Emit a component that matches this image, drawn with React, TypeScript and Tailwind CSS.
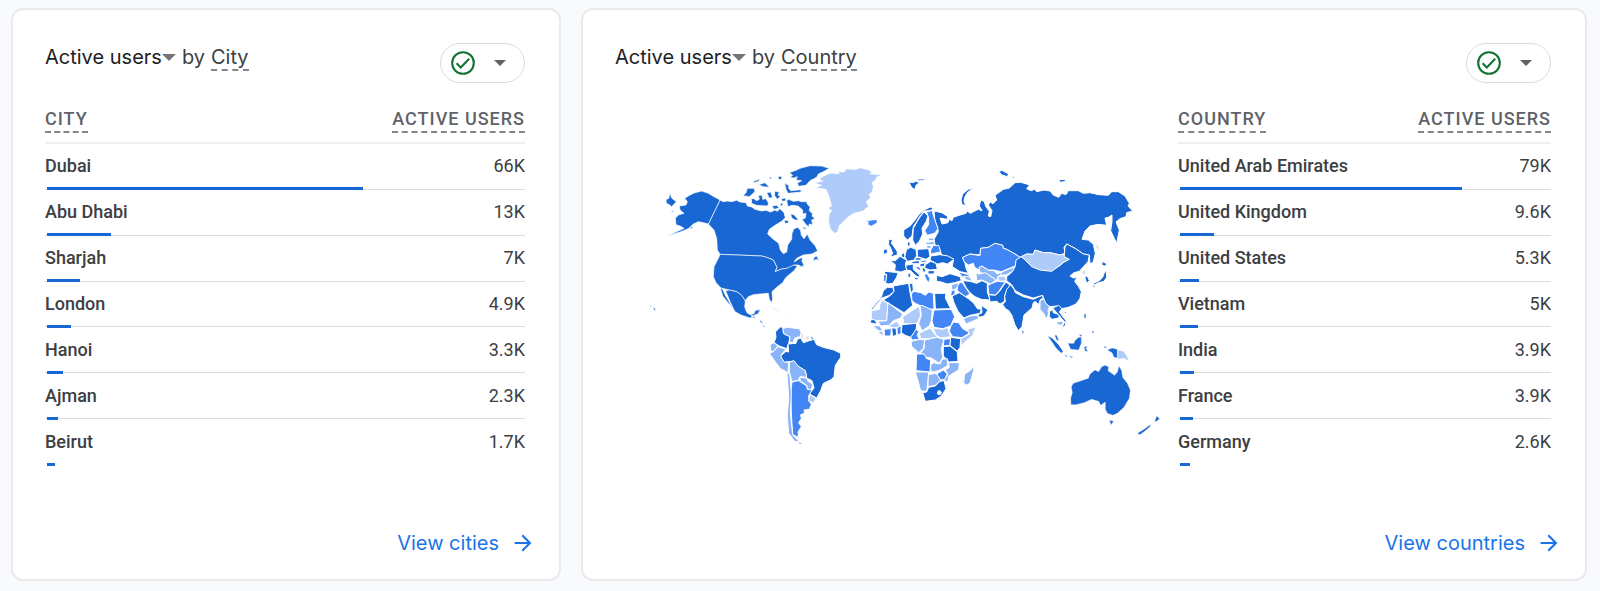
import type { ReactNode } from "react";

interface Row {
  name: string;
  users: string;
  share: number;
}

interface Shape {
  fill: string;
  d: string;
}

interface Region {
  name: string;
  x: number;
  y: number;
  stroke: number;
  shapes: Shape[];
}

const cities: Row[] = [
  { name: "Dubai", users: "66K", share: 66.2 },
  { name: "Abu Dhabi", users: "13K", share: 13.3 },
  { name: "Sharjah", users: "7K", share: 7 },
  { name: "London", users: "4.9K", share: 5 },
  { name: "Hanoi", users: "3.3K", share: 3.4 },
  { name: "Ajman", users: "2.3K", share: 2.3 },
  { name: "Beirut", users: "1.7K", share: 1.7 },
];

const countries: Row[] = [
  { name: "United Arab Emirates", users: "79K", share: 76 },
  { name: "United Kingdom", users: "9.6K", share: 9.2 },
  { name: "United States", users: "5.3K", share: 5.1 },
  { name: "Vietnam", users: "5K", share: 4.8 },
  { name: "India", users: "3.9K", share: 3.7 },
  { name: "France", users: "3.9K", share: 3.6 },
  { name: "Germany", users: "2.6K", share: 2.6 },
];

const XL = "#1967d2";
const L = "#4285f4";
const M = "#8ab4f8";
const S = "#aecbfa";
const NONE = "#e0e0e0";

// Each region has its own origin on the map, shapes are relative to it
const regions: Region[] = [
  {
    name: "North America",
    x: 0,
    y: 0,
    stroke: 2,
    shapes: [
      // Canada
      { fill: XL, d: "M240 150L250 155 262 153 275 155 290 151 300 156 318 158 322 168 335 171 345 178 365 183 378 181 392 186 405 180 412 184 420 176 432 188 436 203 425 214 405 226 388 238 383 252 398 266 416 280 421 300 430 311 440 306 443 285 455 268 456 250 462 236 474 232 482 242 484 256 492 266 502 252 510 270 526 288 533 303 515 312 490 315 470 325 462 336 478 326 488 322 486 334 492 345 484 350 475 345 462 345 452 352 440 355 425 357 405 365 411 352 400 330 380 322 365 318 240 313 232 300 230 265 222 240 205 222Z" },
      // United States
      { fill: XL, d: "M240 313L365 318 380 322 400 330 411 352 405 365 425 357 440 355 462 345 472 348 462 362 455 368 440 380 434 388 428 398 410 412 396 425 398 448 394 458 388 448 385 430 360 432 340 434 325 440 315 452 305 436 290 425 268 420 243 414 228 398 220 380 222 350 235 325Z" },
      { fill: XL, d: "M240 150L205 222 190 218 175 215 160 222 145 236 120 246 82 258 110 245 132 235 120 228 108 224 106 205 115 195 132 190 120 180 118 168 138 165 142 155 134 145 150 135 165 128 185 123 205 130 222 140Z" },
      // Mexico
      { fill: XL, d: "M257 422L268 420 290 425 305 436 316 453 314 470 320 487 330 494 342 491 346 481 361 479 354 492 345 494 338 502 330 504 305 496 285 485 278 472 268 450Z" },
      { fill: XL, d: "M241 414L248 418 256 436 268 456 276 470 262 456 248 438Z" },
      // Eastern tip of Chukotka
      { fill: XL, d: "M90 130L95 144 109 155 95 170 88 164 79 160 78 148 86 146Z" },
      { fill: XL, d: "M93 181L102 184 96 187ZM148 234L160 228 156 236Z" },
      // Arctic islands
      { fill: XL, d: "M448 68L470 60 480 55 510 47 545 48 568 55 550 65 535 72 530 82 510 92 498 106 476 109 472 100 485 92 468 90 472 80 462 84 450 82 458 76Z" },
      { fill: XL, d: "M322 115L342 115 345 125 328 140 309 137 318 128Z" },
      { fill: XL, d: "M334 146L342 146 350 152 358 148 355 136 366 136 368 148 378 146 386 160 382 168 350 166 335 160Z" },
      { fill: XL, d: "M340 94L358 88 358 93 342 98ZM356 104L375 98 388 112 370 110ZM386 82L396 82 392 88ZM414 80L424 78 426 88 416 88Z" },
      { fill: XL, d: "M380 128L392 126 398 142 388 145ZM404 124L418 126 414 136 422 138 412 148 404 138ZM434 100L446 106 446 114 452 122 482 119 484 126 444 130 438 118Z" },
      { fill: XL, d: "M396 168L410 166 418 174 402 178ZM424 146L436 144 438 152 426 154ZM420 158L430 162 424 170Z" },
      { fill: XL, d: "M440 152L446 148 460 154 476 152 484 155 500 155 502 163 510 170 508 182 518 192 516 198 525 206 515 210 518 224 508 222 506 230 498 224 486 208 496 204 498 190 488 192 488 180 474 168 456 166 444 170Z" },
      { fill: XL, d: "M452 192L462 194 476 210 466 210 455 204ZM434 210L446 212 444 220 434 220ZM486 230L500 234 494 238Z" },
      // Newfoundland and Nova Scotia
      { fill: XL, d: "M522 322L530 318 538 332 530 328 520 332ZM478 354L500 344 488 352Z" },
      // Hawaii
      { fill: XL, d: "M40 472L47 477 45 483 41 478ZM28 466L35 468 32 470Z" },
      // Caribbean
      { fill: NONE, d: "M392 468L412 480 410 483 395 474ZM434 486L446 490 438 492Z" },
    ],
  },
  {
    name: "North Atlantic",
    x: 480,
    y: 0,
    stroke: 1,
    shapes: [
      { fill: S, d: "M44 98L70 94 58 86 78 75 92 70 118 72 116 65 132 67 140 57 165 59 180 54 205 60 215 66 210 72 245 75 230 80 228 88 215 98 220 108 216 125 206 134 212 142 198 156 206 170 198 174 190 182 160 190 145 200 132 213 118 226 112 245 105 250 92 238 86 215 88 192 96 182 85 174 95 168 92 155 86 135 78 118 48 113 66 106Z" },
      { fill: L, d: "M198 210L206 213 215 211 230 209 231 218 214 228 203 223 206 217Z" },
    ],
  },
  {
    name: "Eurasia",
    x: 660,
    y: 30,
    stroke: 3,
    shapes: [
      // Russia
      { fill: XL, d: "M222 153L245 158 264 170 260 178 240 174 246 192 264 188 268 178 276 182 280 172 300 165 318 160 322 154 332 160 340 155 355 148 366 152 358 138 362 120 372 124 378 140 388 154 385 168 392 170 396 152 385 135 392 125 398 132 410 120 405 106 416 98 430 88 448 84 465 68 482 67 500 72 508 76 500 86 512 92 525 88 530 95 552 90 570 93 580 105 596 112 605 100 618 104 625 92 655 92 670 100 690 98 715 104 745 106 755 95 775 95 795 108 808 130 804 138 818 153 800 158 798 170 780 176 768 186 778 210 770 250 758 225 752 212 756 185 756 165 745 172 735 174 740 196 715 193 690 198 675 213 666 238 685 240 700 253 706 280 700 305 690 312 688 285 670 282 645 265 620 252 612 262 615 280 600 285 570 278 550 278 525 270 520 283 500 282 480 292 465 282 440 268 430 265 428 256 405 250 385 262 362 265 360 285 330 282 308 292 315 310 318 325 325 340 300 335 277 320 280 300 262 290 245 285 238 265 225 255 222 238 235 215 232 200 225 185Z" },
      { fill: XL, d: "M347 83L332 90 322 98 314 112 312 125 318 136 306 134 303 120 308 102 325 88Z" },
      { fill: XL, d: "M416 32L428 32 446 42 442 50 424 44ZM452 48L464 50 460 55ZM596 60L612 58 620 64 600 67Z" },
      { fill: XL, d: "M146 66L158 68 170 63 176 70 168 76 165 88 156 84ZM172 57L195 57 190 62 176 62Z" },
      { fill: XL, d: "M706 246L712 256 718 272 712 266Z" },
      // Kazakhstan
      { fill: L, d: "M308 292L330 282 360 287 362 265 385 262 405 250 428 256 430 265 440 268 465 282 480 292 470 305 466 318 440 328 425 335 400 330 385 330 365 318 358 330 344 322 340 310 325 315 312 305Z" },
      { fill: M, d: "M357 322L366 318 385 331 402 332 412 342 424 336 428 342 414 350 412 362 380 342 360 338Z" },
      { fill: M, d: "M348 338L358 342 376 338 408 360 392 372 366 360 350 362Z" },
      { fill: M, d: "M426 336L444 328 465 320 458 334 440 344 420 346Z" },
      { fill: S, d: "M412 350L434 348 440 362 418 364Z" },
      { fill: L, d: "M384 376L396 370 412 364 436 366 426 380 416 395 405 406 386 402Z" },
      { fill: XL, d: "M386 404L406 406 418 395 428 380 438 366 450 376 440 392 434 408 434 424 420 432 410 424 390 426Z" },
      // India
      { fill: XL, d: "M440 388L452 374 462 388 466 398 490 410 520 418 546 406 550 414 540 420 536 434 526 424 520 428 516 444 492 465 486 500 475 512 465 495 455 465 445 450 438 448 428 434 436 424 434 410Z" },
      // China
      { fill: XL, d: "M440 350L458 334 466 318 468 300 484 290 500 304 515 318 540 328 575 332 600 316 612 306 626 298 612 290 615 262 620 252 645 265 670 282 688 285 684 305 672 318 658 334 642 338 630 348 640 354 652 352 644 364 656 380 664 395 660 415 648 432 625 442 605 446 590 438 570 440 556 430 548 406 520 414 490 405 466 392 455 374 440 362Z" },
      { fill: S, d: "M484 290L500 282 520 283 525 270 550 278 570 278 600 285 612 282 612 290 628 298 612 306 600 316 575 334 540 330 515 320 500 304Z" },
      { fill: M, d: "M540 422L550 416 558 430 568 440 564 450 566 462 558 478 552 462 540 448Z" },
      { fill: XL, d: "M568 456L578 448 580 458 598 464 596 474 576 478 568 470Z" },
      { fill: XL, d: "M578 444L596 436 606 446 598 456 618 482 616 496 604 506 614 486 592 460Z" },
      { fill: M, d: "M590 486L610 484 606 496 592 494Z" },
      // Japan and Korea
      { fill: XL, d: "M738 330L740 352 732 364 716 368 704 374 700 370 718 362 728 352 732 340Z" },
      { fill: XL, d: "M726 304L742 312 734 318 726 316ZM696 376L706 376 702 384Z" },
      { fill: XL, d: "M674 350L682 348 688 362 680 370Z" },
      { fill: NONE, d: "M664 336L674 328 678 342 668 346Z" },
      { fill: XL, d: "M612 452L620 456 616 462ZM672 462L680 460 678 476 670 474Z" },
      // Scandinavia
      { fill: XL, d: "M131 210L150 198 165 180 178 162 192 150 212 141 222 148 205 152 192 153 180 168 170 184 160 200 156 228 142 240 131 228Z" },
      { fill: XL, d: "M192 156L204 168 198 185 186 204 188 222 178 244 166 256 158 240 160 205 172 184 182 168Z" },
      { fill: L, d: "M200 156L216 151 222 172 234 206 224 220 202 226 194 212 206 194 206 174Z" },
      { fill: XL, d: "M142 248L150 244 150 258 142 258Z" },
      { fill: M, d: "M204 234L222 234 222 242 206 242ZM196 248L222 244 224 254 198 254ZM198 258L214 256 212 266 200 264Z" },
      // British Isles
      { fill: XL, d: "M86 238L98 240 94 250 102 260 112 275 112 285 90 291 98 280 92 264 86 254Z" },
      { fill: XL, d: "M70 270L82 266 82 278 72 284Z" },
      // Western Europe
      { fill: XL, d: "M90 302L106 302 120 289 140 300 136 312 140 330 122 336 104 332 106 314Z" },
      { fill: XL, d: "M76 334L114 338 110 352 98 370 84 372 76 368 80 344 72 340Z" },
      { fill: L, d: "M71 344L80 344 77 366 70 364Z" },
      { fill: XL, d: "M140 268L152 262 168 268 170 286 164 300 142 304 134 290Z" },
      { fill: XL, d: "M124 284L134 276 134 294 124 290Z" },
      { fill: XL, d: "M172 268L206 266 210 290 198 298 172 290Z" },
      { fill: L, d: "M212 270L220 256 236 256 242 276 212 282Z" },
      { fill: XL, d: "M212 288L240 284 264 288 282 298 262 312 248 308 232 312 210 300Z" },
      { fill: XL, d: "M196 314L212 304 228 310 232 328 210 330 194 324Z" },
      { fill: L, d: "M164 294L180 292 186 300 168 302ZM182 302L200 300 200 306 184 308Z" },
      { fill: XL, d: "M158 304L178 302 178 311 154 311ZM180 312L196 308 192 320 178 318Z" },
      { fill: XL, d: "M137 316L160 312 160 328 178 344 180 352 168 348 152 332 140 330Z" },
      { fill: XL, d: "M164 352L176 354 172 360 164 358ZM144 340L152 340 152 352 144 352Z" },
      { fill: L, d: "M164 320L178 320 184 332 176 330Z" },
      { fill: XL, d: "M186 322L196 326 196 338 188 334ZM204 332L224 332 222 342 204 342Z" },
      { fill: L, d: "M192 342L202 342 210 356 206 368 198 358Z" },
      // Middle East
      { fill: XL, d: "M229 346L246 350 270 341 300 350 304 362 284 368 262 372 244 366 230 364Z" },
      { fill: L, d: "M296 336L326 344 330 356 306 350Z" },
      { fill: M, d: "M312 348L332 352 334 364 316 358Z" },
      { fill: XL, d: "M308 362L330 364 350 370 366 362 382 370 382 396 390 420 364 418 345 410 330 398 318 382Z" },
      { fill: L, d: "M292 372L306 366 316 382 330 402 316 410 292 392Z" },
      { fill: M, d: "M274 374L298 368 290 384 276 392Z" },
      { fill: L, d: "M274 392L286 390 284 404 272 408Z" },
    ],
  },
  {
    name: "Africa",
    x: 660,
    y: 360,
    stroke: 3,
    shapes: [
      { fill: XL, d: "M276 78L298 68 325 86 340 98 352 116 364 118 360 130 330 136 312 144 294 124 282 98Z" },
      { fill: XL, d: "M364 106L384 120 372 138 356 142 354 134 366 128Z" },
      { fill: M, d: "M310 146L330 138 352 136 356 146 318 162Z" },
      { fill: XL, d: "M64 82L70 62 82 52 98 52 102 64 88 76 66 84 36 120 34 116Z" },
      { fill: XL, d: "M100 48L146 40 150 68 158 106 132 128 70 90 92 76 102 64Z" },
      { fill: XL, d: "M148 40L158 40 160 60 152 70Z" },
      { fill: L, d: "M154 72L162 64 182 68 196 76 206 66 220 70 222 118 200 116 166 100 156 92Z" },
      { fill: XL, d: "M224 70L258 70 256 84 272 116 226 117Z" },
      { fill: S, d: "M34 122L58 118 60 102 66 90 84 100 80 152 50 152 34 148Z" },
      { fill: M, d: "M84 98L128 132 122 144 100 152 88 166 62 168 54 154 80 152Z" },
      { fill: S, d: "M128 140L178 108 182 136 172 160 132 162Z" },
      { fill: M, d: "M180 108L186 106 217 120 214 152 208 168 186 182 176 160 184 136Z" },
      { fill: L, d: "M222 120L274 118 284 140 272 168 248 176 222 172 216 152Z" },
      { fill: S, d: "M220 174L248 178 262 172 272 200 244 204 228 196Z" },
      { fill: L, d: "M272 170L280 156 296 158 308 176 330 188 306 203 278 200 268 184Z" },
      { fill: S, d: "M322 178L348 170 338 196 304 226 302 206 328 192Z" },
      { fill: XL, d: "M126 164L170 160 168 182 152 202 136 196 124 188Z" },
      { fill: L, d: "M168 178L176 184 172 196 178 208 156 210 152 202Z" },
      { fill: S, d: "M178 190L210 174 232 202 204 206 182 206Z" },
      { fill: M, d: "M194 210L230 202 252 208 244 236 248 262 238 280 214 264 200 262 182 248 192 236Z" },
      { fill: M, d: "M154 214L180 208 194 210 190 236 176 248 154 228Z" },
      { fill: L, d: "M252 208L272 206 270 226 250 228Z" },
      { fill: XL, d: "M272 202L302 206 300 232 292 244 270 226Z" },
      { fill: XL, d: "M250 230L270 228 292 246 294 274 268 276 250 258Z" },
      { fill: L, d: "M170 252L192 252 200 266 212 270 210 306 168 302Z" },
      { fill: M, d: "M212 284L222 278 240 282 246 268 262 266 262 288 240 300 220 306 212 302Z" },
      { fill: M, d: "M266 278L298 278 296 300 266 318 264 334 256 336 254 328 264 312 256 300 268 292Z" },
      { fill: L, d: "M230 312L250 300 262 312 254 328 242 330Z" },
      { fill: M, d: "M204 314L228 310 242 330 226 346 204 350Z" },
      { fill: M, d: "M166 306L206 306 202 350 200 364 182 362 174 332Z" },
      { fill: XL, d: "M188 368L200 366 206 352 226 348 240 334 252 332 258 356 244 378 226 390 196 394Z" },
      { fill: "#ffffff", d: "M232 366L238 361 244 366 242 373 234 374Z" },
      { fill: M, d: "M343 288L340 304 330 340 318 346 311 338 314 312 330 302Z" },
      { fill: XL, d: "M32 150L42 148 50 158 46 162 30 158Z" },
      { fill: M, d: "M38 166L60 168 68 184 56 182 46 174Z" },
      { fill: L, d: "M72 178L94 176 92 198 74 198Z" },
      { fill: XL, d: "M95 174L108 174 110 194 98 200Z" },
      { fill: S, d: "M86 168L110 154 120 168 108 174 94 172Z" },
      { fill: L, d: "M111 174L123 166 123 192 112 194Z" },
      { fill: M, d: "M54 186L66 184 74 198 62 192Z" },
    ],
  },
  {
    name: "South America",
    x: 300,
    y: 450,
    stroke: 3,
    shapes: [
      { fill: XL, d: "M102 128L108 112 106 96 122 80 130 84 130 100 150 110 146 130 140 146 118 138Z" },
      { fill: M, d: "M128 86L140 82 178 86 184 98 180 110 164 114 158 130 148 124 150 110 132 102Z" },
      { fill: NONE, d: "M184 96L192 104 188 122 182 110ZM196 108L208 108 208 118 198 120Z" },
      { fill: M, d: "M212 108L222 112 220 120 212 120Z" },
      { fill: M, d: "M90 134L102 128 114 138 98 156 92 150Z" },
      { fill: M, d: "M98 156L114 140 138 148 122 166 134 184 146 188 144 218 122 206 106 186 88 160Z" },
      { fill: XL, d: "M122 168L138 154 146 156 144 132 168 130 172 118 182 114 190 128 208 122 222 118 230 134 250 142 282 150 302 160 302 172 286 196 282 230 272 240 250 250 242 272 230 294 208 282 222 264 216 242 200 234 196 212 172 198 160 184 132 186Z" },
      { fill: M, d: "M148 186L162 182 174 198 196 212 200 232 180 230 174 242 156 244 148 216Z" },
      { fill: M, d: "M180 232L200 234 204 244 218 252 214 270 202 266 200 256 180 242Z" },
      { fill: L, d: "M156 246L176 242 200 258 202 268 216 270 206 288 208 302 214 314 208 328 192 330 194 340 182 344 184 356 176 368 184 380 174 396 176 412 158 404 154 340 152 280Z" },
      { fill: S, d: "M208 284L228 294 222 308 206 304Z" },
      { fill: M, d: "M141 218L149 220 154 280 151 340 155 380 159 406 180 426 164 424 146 400 142 350 146 290Z" },
      { fill: M, d: "M174 424L190 432 178 434Z" },
      // Central America
      { fill: M, d: "M34 46L46 50 46 58 38 54ZM56 56L68 64 70 74 60 68ZM64 70L76 78 76 86 68 78Z" },
      { fill: NONE, d: "M106 24L118 30 116 34ZM136 38L144 42 140 44Z" },
    ],
  },
  {
    name: "Oceania",
    x: 1140,
    y: 420,
    stroke: 1,
    shapes: [
      { fill: XL, d: "M153 344L152 325 157 308 154 290 160 280 178 274 205 265 210 252 225 240 236 245 245 230 256 226 266 231 264 242 284 256 292 246 297 228 305 242 308 262 322 280 331 300 328 325 312 352 292 370 278 376 262 370 256 358 256 336 242 346 236 334 215 328 192 338 168 344Z" },
      { fill: XL, d: "M268 390L281 394 273 405Z" },
      { fill: XL, d: "M352 430L372 418 392 403 390 410 374 424 360 434ZM404 394L410 378 419 386 410 394Z" },
      { fill: XL, d: "M83 138L96 144 116 164 129 184 124 190 108 174 96 156Z" },
      { fill: XL, d: "M104 136L110 136 117 152 110 150ZM132 194L142 197 140 201ZM148 198L160 201 152 203Z" },
      { fill: XL, d: "M144 160L162 160 164 152 176 142 184 142 184 160 176 180 152 178Z" },
      { fill: XL, d: "M192 172L202 168 198 176 204 184 196 184ZM252 168L262 174 254 174ZM176 134L186 134 184 140Z" },
      { fill: XL, d: "M262 180L276 174 292 178 292 204 282 202 276 188Z" },
      { fill: S, d: "M294 180L310 184 318 194 328 214 312 204 294 208Z" },
      { fill: XL, d: "M216 122L222 124 218 132ZM194 72L198 78 194 84ZM6 120L12 126 8 132Z" },
    ],
  },
];

function WorldMap() {
  return (
    <svg viewBox="-75 -129 1665 1071" className="w-full" role="img" aria-label="Active users by country">
      {regions.map((region) => (
        <g
          key={region.name}
          transform={`translate(${region.x} ${region.y})`}
          stroke="#ffffff"
          strokeWidth={region.stroke}
          strokeLinejoin="round"
        >
          {region.shapes.map((shape) => (
            <path key={shape.d} fill={shape.fill} d={shape.d} />
          ))}
        </g>
      ))}
    </svg>
  );
}

function Caret({ className }: { className: string }) {
  return (
    <svg viewBox="0 0 14 7" className={className} fill="currentColor" aria-hidden="true">
      <path d="M0 0h14L7 7z" />
    </svg>
  );
}

function StatusButton() {
  return (
    <button
      aria-label="Data quality"
      className="flex h-10 w-[85px] items-center justify-between rounded-full border border-[#dadce0] pr-[18px] pl-[10px] cursor-pointer"
    >
      <svg viewBox="0 0 24 24" className="size-6" fill="none" stroke="#137333" aria-hidden="true">
        <circle cx="12" cy="12" r="10.8" strokeWidth="2.1" />
        <path d="M5.6 12.2l4.2 4.2 8.4-8.6" strokeWidth="2.1" />
      </svg>
      <Caret className="h-[6px] w-3 text-[#5f6368]" />
    </button>
  );
}

function UsersTable({ label, rows }: { label: string; rows: Row[] }) {
  return (
    <table className="h-[357px] w-full border-collapse text-lg leading-6 text-[#3c4043]">
      <thead>
        <tr className="h-9 border-b-2 border-[#eeeff0] text-[#5f6368] uppercase">
          <th className="pb-[9px] text-left font-medium">
            <span className="inline-block border-b-2 border-dashed border-[#80868b] tracking-[1px]">{label}</span>
          </th>
          <th className="pb-[9px] text-right font-medium">
            <span className="inline-block border-b-2 border-dashed border-[#80868b] tracking-[1px]">Active users</span>
          </th>
        </tr>
      </thead>
      <tbody>
        {rows.map((row) => (
          <tr key={row.name} className="relative border-b border-[#dadce0] last:border-b-0">
            <td className="py-[10px] font-medium">
              {row.name}
              <div className="absolute inset-x-0 -bottom-[2px] pl-[2px]">
                <div className="h-[3px] bg-[#1967d2]" style={{ width: `${row.share}%` }} />
              </div>
            </td>
            <td className="py-[10px] text-right">{row.users}</td>
          </tr>
        ))}
      </tbody>
    </table>
  );
}

interface CardProps {
  dimension: string;
  linkText: string;
  children: ReactNode;
}

function Card({ dimension, linkText, children }: CardProps) {
  return (
    <section className="flex flex-col rounded-xl border-2 border-[#e8eaed] bg-white">
      <header className="flex items-start justify-between pt-[33px] pr-[34px] pl-8">
        <h2 className="flex items-baseline font-[Inter,sans-serif] text-xl leading-7 text-[#3c4043]">
          <button className="flex items-center text-[#202124] cursor-pointer">
            Active users
            <Caret className="h-[7px] w-[14px] text-[#757575]" />
          </button>
          <span className="ml-[6px]">by</span>
          <span className="ml-[6px] border-b-2 border-dashed border-[#80868b] leading-6">{dimension}</span>
        </h2>
        <StatusButton />
      </header>
      <div className="flex-1 pt-6 pr-[34px] pl-8">{children}</div>
      <footer className="flex justify-end pr-6 pb-4">
        <a href="#" className="flex h-10 items-center gap-3 font-[Inter,sans-serif] text-xl text-[#1a73e8]">
          {linkText}
          <svg viewBox="0 0 24 24" className="size-6" fill="currentColor" aria-hidden="true">
            <path d="M12 3.6l-1.5 1.5 5.9 5.9H3.6v2h12.8l-5.9 5.9L12 20.4l8.4-8.4z" />
          </svg>
        </a>
      </footer>
    </section>
  );
}

export default function App() {
  return (
    <main className="grid min-h-screen grid-cols-[550fr_1006fr] gap-5 bg-[#f8fafc] pt-2 pr-[13px] pb-[10px] pl-[11px] font-[Roboto,sans-serif]">
      <Card dimension="City" linkText="View cities">
        <UsersTable label="City" rows={cities} />
      </Card>
      <Card dimension="Country" linkText="View countries">
        <div className="flex gap-2">
          <div className="flex-1">
            <WorldMap />
          </div>
          <div className="w-[373px]">
            <UsersTable label="Country" rows={countries} />
          </div>
        </div>
      </Card>
    </main>
  );
}
